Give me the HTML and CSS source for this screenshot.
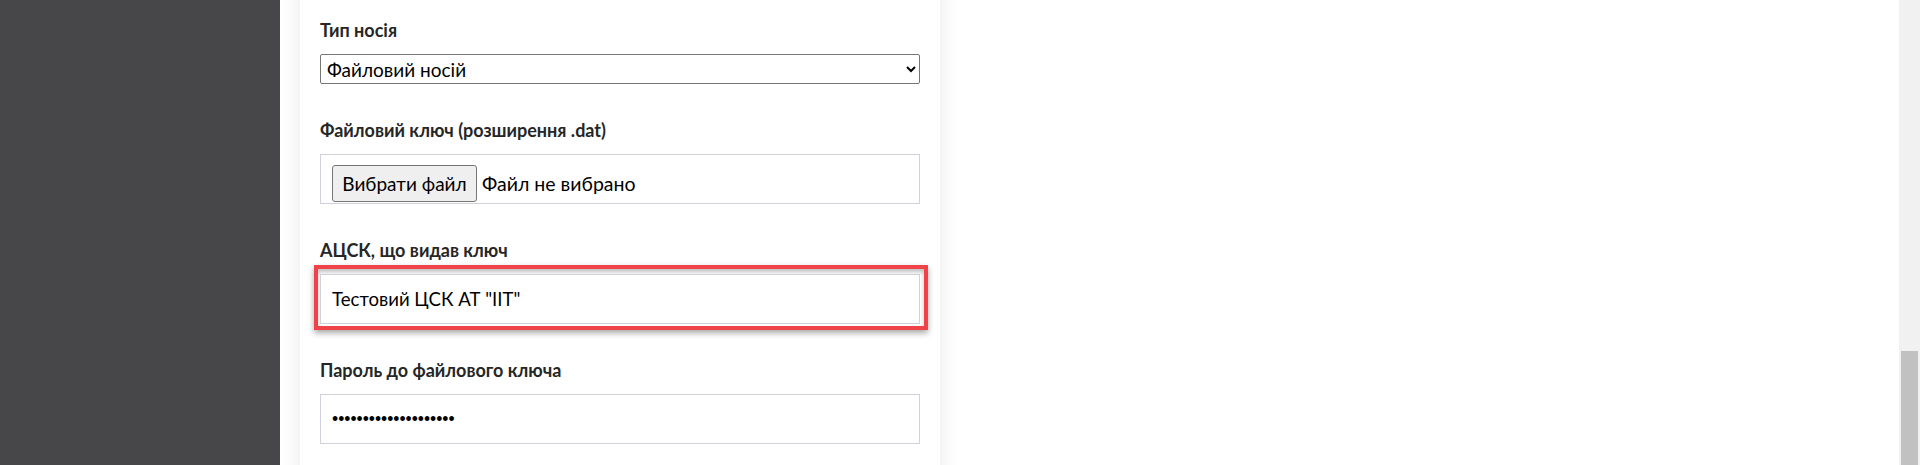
FILE: index.html
```html
<!DOCTYPE html>
<html lang="uk">
<head>
<meta charset="utf-8">
<title>Зчитування ключа</title>
<link rel="stylesheet" href="styles.css">
</head>
<body>
<div class="app">
  <aside class="sidebar"></aside>
  <main class="main">
    <form class="card">
      <div class="group">
        <label class="label">Тип носія</label>
        <select class="select"><option>Файловий носій</option></select>
      </div>
      <div class="group">
        <label class="label">Файловий ключ (розширення .dat)</label>
        <div class="file-box">
          <button type="button" class="file-btn">Вибрати файл</button>
          <span class="file-name">Файл не вибрано</span>
        </div>
      </div>
      <div class="group">
        <label class="label">АЦСК, що видав ключ</label>
        <div class="highlight">
          <input class="input" type="text" value="Тестовий ЦСК АТ &quot;IIT&quot;">
        </div>
      </div>
      <div class="group">
        <label class="label">Пароль до файлового ключа</label>
        <input class="input password" type="password" value="12345678901234567890">
      </div>
    </form>
  </main>
  <div class="scrollbar"><div class="thumb"></div></div>
</div>
</body>
</html>
```
FILE: styles.css
```css
* { box-sizing: border-box; }
html, body { margin: 0; padding: 0; }
body {
  font-family: Lato, "Noto Sans", sans-serif;
  color: #1f1f1f;
  background: #fff;
}
.app {
  display: flex;
  height: 465px;
  overflow: hidden;
}
.sidebar {
  width: 280px;
  flex: none;
  background: #474648;
}
.main {
  flex: 1;
  background: #fff;
  overflow: hidden;
}
.card {
  width: 640px;
  margin: -20px 0 0 20px;
  padding: 38px 20px 40px;
  background: #fff;
  box-shadow: 0 0 20px rgba(0, 0, 0, 0.09);
  min-height: 520px;
}
.group {
  display: flex;
  flex-direction: column;
  margin-bottom: 34px;
}
.label {
  display: block;
  font-size: 18px;
  font-weight: 700;
  line-height: 24px;
  height: 24px;
  margin-bottom: 12px;
  color: #262626;
}
.select {
  height: 30px;
  width: 100%;
  font-family: inherit;
  font-size: 19px;
  padding: 0 2px;
  border: 1px solid #767676;
  border-radius: 2px;
  background: #fff;
  color: #000;
}
.file-box {
  height: 50px;
  border: 1px solid #d1d1dd;
  padding: 10px 11px 0;
  display: flex;
  align-items: flex-start;
}
.file-btn {
  height: 37px;
  width: 145px;
  font-family: inherit;
  font-size: 19px;
  color: #000;
  background: #efefef;
  border: 1px solid #767676;
  border-radius: 3px;
  padding: 0;
}
.file-name {
  margin-left: 5px;
  font-size: 19.5px;
  line-height: 37px;
  color: #000;
}
.input {
  display: block;
  width: 100%;
  height: 50px;
  border: 1px solid #d1d1dd;
  padding: 0 11px;
  font-family: inherit;
  font-size: 18.6px;
  color: #000;
  background: #fff;
  outline: none;
}
.password {
  font-family: "Liberation Sans", Arial, sans-serif;
  font-size: 17.5px;
}
.highlight {
  margin: -9px -8px -6px -6px;
  border: 4px solid #f04349;
  padding: 5px 4px 2px 2px;
  box-shadow: 0 3px 6px rgba(0, 0, 0, 0.35), inset 0 3px 4px rgba(0, 0, 0, 0.25);
}
.scrollbar {
  width: 21px;
  flex: none;
  background: #f1f1f1;
  display: flex;
  flex-direction: column;
  justify-content: flex-end;
  padding: 0 2px;
}
.thumb {
  height: 114px;
  background: #c1c1c1;
}
```
